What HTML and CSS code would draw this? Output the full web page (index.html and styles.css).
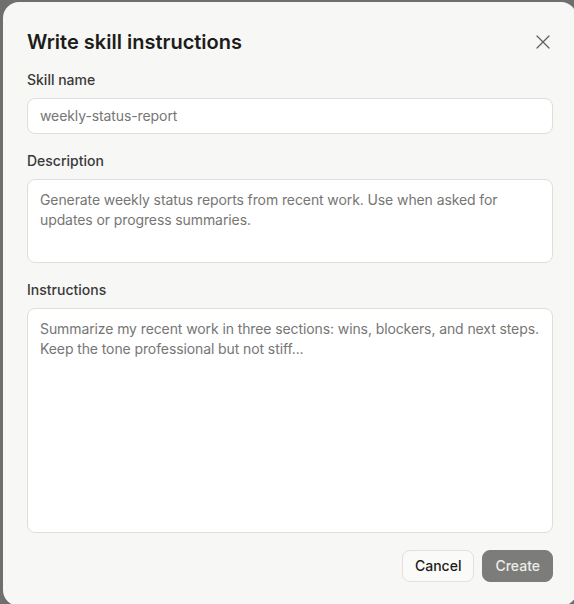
FILE: index.html
```html
<!DOCTYPE html>
<html>
<head>
    <link rel="stylesheet" href="styles.css">
</head>
<body>
    <div class="dialog">
        <div class="dialog-header">
            <h2 class="dialog-title">Write skill instructions</h2>
            <button class="close-btn" aria-label="Close">
                <svg width="16" height="16" viewBox="0 0 16 16" fill="none">
                    <path d="M2 2L14 14M14 2L2 14" stroke="#5c5c5a" stroke-width="1.2" stroke-linecap="round"/>
                </svg>
            </button>
        </div>

        <div class="field">
            <label class="field-label">Skill name</label>
            <input class="field-input" type="text" placeholder="weekly-status-report">
        </div>

        <div class="field">
            <label class="field-label">Description</label>
            <textarea class="field-input field-desc" placeholder="Generate weekly status reports from recent work. Use when asked for updates or progress summaries."></textarea>
        </div>

        <div class="field">
            <label class="field-label">Instructions</label>
            <textarea class="field-input field-instr" placeholder="Summarize my recent work in three sections: wins, blockers, and next steps. Keep the tone professional but not stiff..."></textarea>
        </div>

        <div class="dialog-actions">
            <button class="btn btn-cancel">Cancel</button>
            <button class="btn btn-create" disabled>Create</button>
        </div>
    </div>
</body>
</html>
```

FILE: styles.css
```css
* {
    box-sizing: border-box;
}

body {
    margin: 0;
    height: 604px;
    background: #6f6f6f;
    overflow: hidden;
    font-family: Inter, "Noto Sans", sans-serif;
}

.dialog {
    width: 574px;
    margin: 2px 0 0 3px;
    padding: 28px 24px 24px;
    background: #f7f7f5;
    border-radius: 16px;
    display: flex;
    flex-direction: column;
    gap: 17px;
}

.dialog-header {
    display: flex;
    justify-content: space-between;
    align-items: center;
    margin-bottom: -1px;
}

.dialog-title {
    margin: 0;
    font-size: 20px;
    line-height: 24px;
    font-weight: 600;
    color: #1c1c1b;
}

.close-btn {
    border: none;
    background: none;
    padding: 0;
    width: 16px;
    height: 16px;
    margin-right: 2px;
    display: flex;
}

.field {
    display: flex;
    flex-direction: column;
    gap: 8px;
}

.field-label {
    font-size: 14px;
    line-height: 20px;
    font-weight: 500;
    color: #3a3a38;
}

.field-input {
    width: 100%;
    font-family: inherit;
    font-size: 14px;
    line-height: 20px;
    letter-spacing: -0.1px;
    padding: 7px 12px;
    background: #fff;
    border: 1px solid #dfded9;
    border-radius: 8px;
    color: #2a2a28;
    resize: none;
    outline: none;
}

.field-input::placeholder {
    color: #767674;
}

.field-desc {
    height: 84px;
    padding-top: 10px;
}

.field-instr {
    height: 225px;
    padding-top: 10px;
}

.dialog-actions {
    display: flex;
    justify-content: flex-end;
    gap: 8px;
}

.btn {
    font-family: inherit;
    font-size: 14px;
    font-weight: 500;
    line-height: 20px;
    height: 32px;
    padding: 5px 12px;
    border-radius: 8px;
}

.btn-cancel {
    background: #fafaf9;
    border: 1px solid #e2e1dd;
    color: #1c1c1b;
}

.btn-create {
    background: #7c7c7a;
    border: 1px solid #7c7c7a;
    color: #ececea;
}
```
